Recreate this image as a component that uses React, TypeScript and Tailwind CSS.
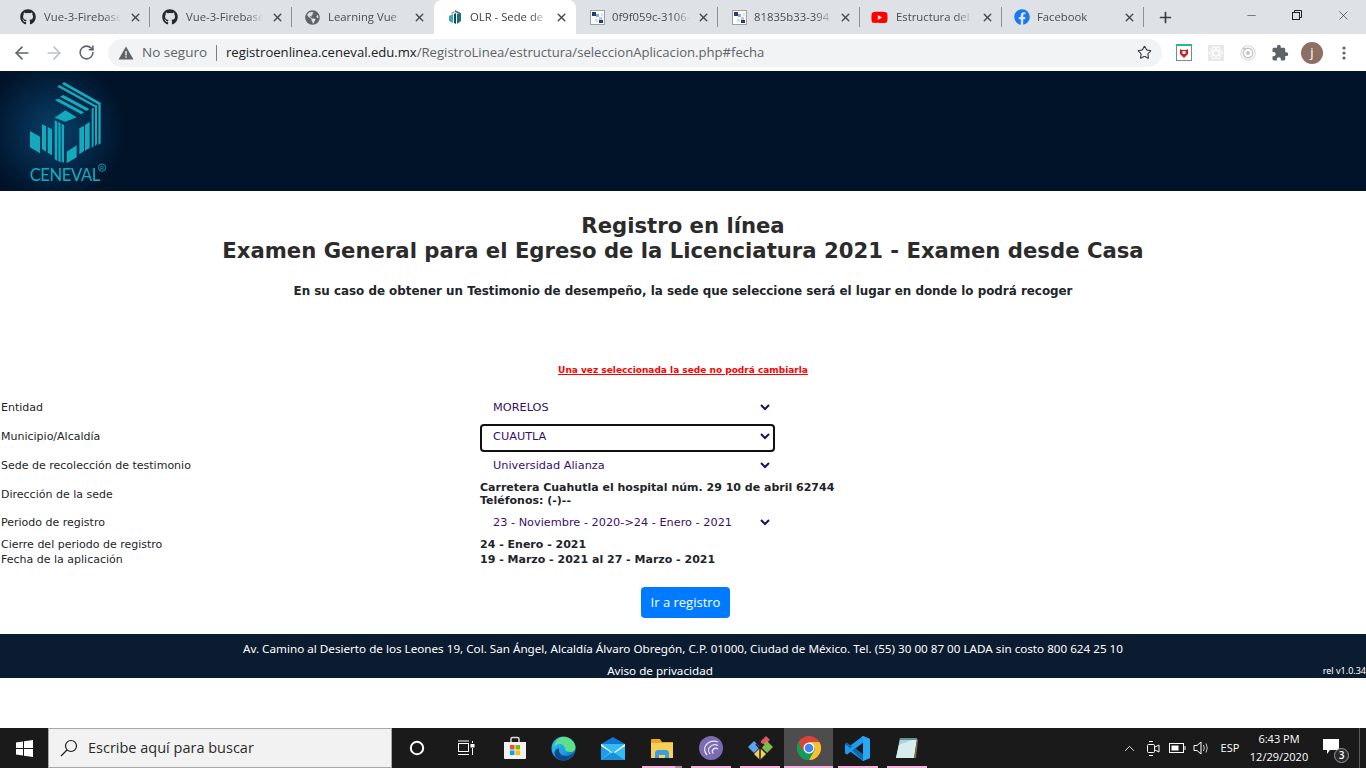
import { ArrowLeft, ArrowRight, RotateCw, Star, X, Plus, Minus, ChevronUp } from 'lucide-react';
import { FaGithub, FaGlobeAmericas, FaYoutube, FaFacebook } from 'react-icons/fa';
import { MdExtension } from 'react-icons/md';

function OlrIcon() {
	return (
		<svg width="16" height="16" viewBox="0 0 16 16">
			<path d="M8 1l5 2.5v2L8 3z" fill="#2a7f8f" />
			<path d="M2 7l4-2v9l-4-2z" fill="#3fa7b5" />
			<path d="M7 5l2-1v11l-2-1z" fill="#0d4a5a" />
			<path d="M10 5l4-1v8l-4 3z" fill="#1b6f80" />
			<path d="M4 4l3-2 1 1-3 2z" fill="#c2a35a" />
		</svg>
	);
}

function PixelIcon() {
	return (
		<svg width="15" height="15" viewBox="0 0 15 15">
			<rect x="0.5" y="0.5" width="14" height="14" fill="#fff" stroke="#9aa0a6" />
			<rect x="2" y="2" width="4" height="4" fill="#1f3f73" />
			<rect x="6" y="4" width="3" height="3" fill="#8fa9cf" />
			<rect x="9" y="7" width="3" height="3" fill="#b9cbe3" />
			<rect x="9" y="10" width="4" height="3" fill="#1f3f73" />
			<rect x="5" y="9" width="3" height="3" fill="#d5dfee" />
			<rect x="11" y="3" width="2" height="3" fill="#d5dfee" />
		</svg>
	);
}

const tabs = [
	{ title: 'Vue-3-Firebase', icon: <FaGithub size={16} className="text-[#24292e]" />, left: 'pl-[11px]', gap: 'gap-[8px]' },
	{ title: 'Vue-3-Firebase', icon: <FaGithub size={16} className="text-[#24292e]" />, left: 'pl-[11px]', gap: 'gap-[8px]' },
	{ title: 'Learning Vue', icon: <FaGlobeAmericas size={15} className="text-[#5f6368]" />, left: 'pl-[12px]', gap: 'gap-[7px]' },
	{ title: 'OLR - Sede de', icon: <OlrIcon />, left: 'pl-[12px]', gap: 'gap-[7px]', active: true },
	{ title: '0f9f059c-3106-', icon: <PixelIcon />, left: 'pl-[13px]', gap: 'gap-[6px]' },
	{ title: '81835b33-394', icon: <PixelIcon />, left: 'pl-[13px]', gap: 'gap-[6px]' },
	{ title: 'Estructura del', icon: <FaYoutube size={17} className="text-[#f00]" />, left: 'pl-[11px]', gap: 'gap-[8px]' },
	{ title: 'Facebook', icon: <FaFacebook size={16} className="text-[#1877f2]" />, left: 'pl-[11px]', gap: 'gap-[7px]' },
];

function TabStrip() {
	return (
		<div className="h-[34px] bg-[#dee1e6] flex pl-2 font-['Open_Sans',sans-serif] text-[11.3px]">
			{tabs.map((t, i) => (
				<div
					key={i}
					className={`relative w-[142px] h-full flex items-center ${t.left} pr-[8px] ${t.gap} ${t.active ? 'bg-white rounded-t-lg text-[#3c4043]' : 'text-[#4a4d51]'}`}
				>
					<span className="w-[17px] flex justify-center shrink-0">{t.icon}</span>
					<span className="flex-1 overflow-hidden whitespace-nowrap [mask-image:linear-gradient(to_right,black_78%,transparent_100%)]">{t.title}</span>
					<X size={13} strokeWidth={2.6} className="text-[#45484c] shrink-0" />
					{!t.active && i !== 2 && <div className="absolute right-0 top-[7px] h-[20px] w-px bg-[#8e9196]" />}
				</div>
			))}
			<div className="w-[42px] flex items-center justify-center">
				<Plus size={17} strokeWidth={2.4} className="text-[#3c4043]" />
			</div>
			<div className="flex-1" />
			<div className="flex h-full items-start text-[#202124]">
				<div className="w-[46px] h-[30px] flex items-center justify-center"><Minus size={13} strokeWidth={1} /></div>
				<div className="w-[46px] h-[30px] flex items-center justify-center">
					<svg width="10" height="10" viewBox="0 0 10 10" fill="none" stroke="currentColor">
						<rect x="0.5" y="2.5" width="7" height="7" />
						<path d="M2.5 2.5v-2h7v7h-2" />
					</svg>
				</div>
				<div className="w-[46px] h-[30px] flex items-center justify-center"><X size={15} strokeWidth={1} /></div>
			</div>
		</div>
	);
}

function ExtCell({ children }: { children: React.ReactNode }) {
	return <div className="w-[32px] flex items-center justify-center">{children}</div>;
}

function Toolbar() {
	return (
		<div className="h-[37px] bg-white flex items-center font-['Open_Sans',sans-serif]">
			<div className="w-[108px] flex items-center pl-[6px] text-[#5f6368]">
				<ExtCell><ArrowLeft size={20} strokeWidth={2} /></ExtCell>
				<ExtCell><ArrowRight size={20} strokeWidth={2} className="text-[#bdc1c6]" /></ExtCell>
				<ExtCell><RotateCw size={17} strokeWidth={2.2} /></ExtCell>
			</div>
			<div className="w-[1054px] h-[28px] rounded-full bg-[#f1f3f4] flex items-center pl-[10px] pr-[10px] text-[13.1px]">
				<svg width="16" height="14" viewBox="0 0 16 14" className="shrink-0">
					<path d="M8 0.5L15.5 13.5H0.5z" fill="#5f6368" />
					<rect x="7.3" y="5" width="1.4" height="4.5" fill="#f1f3f4" />
					<rect x="7.3" y="10.3" width="1.4" height="1.5" fill="#f1f3f4" />
				</svg>
				<span className="ml-[8px] w-[65px] text-[13.5px] text-[#5f6368] whitespace-nowrap">No seguro</span>
				<span className="ml-[9px] mr-[9px] w-px h-[16px] bg-[#7a7d81]" />
				<span className="whitespace-nowrap text-[#5f6368]"><span className="text-[#202124]">registroenlinea.ceneval.edu.mx</span>/RegistroLinea/estructura/seleccionAplicacion.php#fecha</span>
				<span className="flex-1" />
				<Star size={15} strokeWidth={1.8} className="text-[#3c4043]" />
			</div>
			<div className="flex-1 flex items-center pl-[6px]">
				<ExtCell>
					<svg width="18" height="18" viewBox="0 0 18 18">
						<rect x="1.5" y="1.5" width="15" height="15" fill="#fff" stroke="#80868b" />
						<rect x="1" y="0" width="16" height="2" fill="#1bc47d" />
						<path d="M5 5l2 1h4l2-1v5l-4 4-4-4z" fill="#c8202f" />
						<rect x="7.5" y="7" width="3" height="3" fill="#fff" />
					</svg>
				</ExtCell>
				<ExtCell>
					<svg width="16" height="16" viewBox="0 0 16 16">
						<rect width="16" height="16" fill="#e8e8e8" />
						<g fill="none" stroke="#fff" strokeWidth="1">
							<ellipse cx="8" cy="8" rx="6.5" ry="2.6" />
							<ellipse cx="8" cy="8" rx="6.5" ry="2.6" transform="rotate(60 8 8)" />
							<ellipse cx="8" cy="8" rx="6.5" ry="2.6" transform="rotate(120 8 8)" />
						</g>
					</svg>
				</ExtCell>
				<ExtCell>
					<svg width="16" height="16" viewBox="0 0 16 16" fill="none">
						<circle cx="8" cy="8" r="7.2" stroke="#d5d5d5" />
						<circle cx="8" cy="8" r="4.8" stroke="#c4c4c4" strokeWidth="1.4" />
						<circle cx="8" cy="8" r="2" fill="#c4c4c4" />
						<circle cx="4" cy="3.5" r="1" fill="#bdbdbd" />
					</svg>
				</ExtCell>
				<ExtCell><MdExtension size={18} className="text-[#5f6368]" /></ExtCell>
				<ExtCell>
					<div className="w-[22px] h-[22px] rounded-full bg-[#8d6e63] flex items-center justify-center text-white text-[13px]">j</div>
				</ExtCell>
				<ExtCell>
					<svg width="4" height="14" viewBox="0 0 4 14" fill="#5f6368">
						<circle cx="2" cy="2" r="1.6" />
						<circle cx="2" cy="7" r="1.6" />
						<circle cx="2" cy="12" r="1.6" />
					</svg>
				</ExtCell>
			</div>
		</div>
	);
}

function CenevalLogo() {
	const c = '#14aabd';
	return (
		<svg width="140" height="120" viewBox="0 0 420 360">
			<g fill={c}>
				<path d="M192 33l110 62-6 6-110-62z" />
				<path d="M178 42l112 62-6 5-112-62z" />
				<path d="M190 72l78 42-8 6-80-43z" />
				<path d="M176 83l76 41-8 6-80-43z" />
				<path d="M196 118l34 21-34 13-32-12z" />
				<path d="M275 114l6-5v116l-6 6z" />
				<path d="M285 106l6-4v118l-6 5z" />
				<path d="M295 99l7-4v122l-7 5z" />
				<path d="M238 172l14-8v76l-14 10z" />
				<path d="M255 162l14-9v78l-14 8z" />
				<path d="M164 148l8 4v118l-8-5z" />
				<path d="M175 153l7 4v117l-7-4z" />
				<path d="M185 158l7 4v113l-7-3z" />
				<path d="M200 242l30-19v36l-30 18z" />
				<path d="M126 160l12 6v76l-12-8z" />
				<path d="M143 168l13 7v78l-13-8z" />
				<path d="M90 180l30 17v50l-30-18z" />
			</g>
			<text x="195" y="330" textAnchor="middle" fontFamily="Lato,sans-serif" fontSize="50" fill={c} textLength="212">CENEVAL</text>
			<circle cx="306" cy="290" r="11" fill="none" stroke={c} strokeWidth="2.5" />
			<text x="306" y="297" textAnchor="middle" fontFamily="'Liberation Sans',sans-serif" fontSize="17" fill={c}>R</text>
		</svg>
	);
}

function Chevron() {
	return (
		<svg width="10" height="7" viewBox="0 0 10 7" fill="none" stroke="#14145f" strokeWidth="2" className="mb-[2px]">
			<path d="M1 1l4 4 4-4" />
		</svg>
	);
}

function FakeSelect({ value, focused }: { value: string; focused?: boolean }) {
	return (
		<div
			className={`w-[295px] h-[28px] rounded-[4px] border-2 flex items-center justify-between pl-[11px] pr-[3.5px] text-[11.3px] text-[#37106b] ${focused ? 'border-[#101010]' : 'border-transparent'}`}
		>
			<span>{value}</span>
			<Chevron />
		</div>
	);
}

function Row({ label, className, children }: { label: string; className: string; children: React.ReactNode }) {
	return (
		<div className={`flex items-center ${className}`}>
			<div className="w-[480px] pl-px text-[#212529]">{label}</div>
			<div>{children}</div>
		</div>
	);
}

function MainPage() {
	return (
		<div className="flex flex-col font-['DejaVu_Sans',sans-serif] text-[#212529]">
			<div className="h-[120px] bg-[#001329] relative overflow-hidden">
				<div className="absolute left-[-15px] top-[-10px] w-[140px] h-[140px] bg-[radial-gradient(closest-side,#07416a_0%,#04294a_50%,#00132900_100%)]" />
				<div className="relative"><CenevalLogo /></div>
			</div>
			<div className="bg-white h-[443px] flex flex-col">
				<div className="pt-[22px] text-center font-bold text-[21.2px] leading-[25px] text-[#2b2b2b]">
					<div>Registro en línea</div>
					<div>Examen General para el Egreso de la Licenciatura 2021 - Examen desde Casa</div>
				</div>
				<p className="mt-[19px] text-center font-bold text-[11.9px] leading-[18px]">
					En su caso de obtener un Testimonio de desempeño, la sede que seleccione será el lugar en donde lo podrá recoger
				</p>
				<p className="mt-[63px] text-center font-bold text-[9px] leading-[14px] text-[#f00] underline">
					Una vez seleccionada la sede no podrá cambiarla
				</p>
				<div className="mt-[17px] text-[11px]">
					<Row label="Entidad" className="h-[29px]"><FakeSelect value="MORELOS" /></Row>
					<Row label="Municipio/Alcaldía" className="h-[29px]"><FakeSelect value="CUAUTLA" focused /></Row>
					<Row label="Sede de recolección de testimonio" className="h-[29px]"><FakeSelect value="Universidad Alianza" /></Row>
					<Row label="Dirección de la sede" className="h-[28px]">
						<div className="font-bold leading-[13px] -mt-[2px]">
							<div>Carretera Cuahutla el hospital núm. 29 10 de abril 62744</div>
							<div>Teléfonos: (-)--</div>
						</div>
					</Row>
					<Row label="Periodo de registro" className="h-[29px]"><FakeSelect value="23 - Noviembre - 2020->24 - Enero - 2021" /></Row>
					<Row label="Cierre del periodo de registro" className="h-[15px]"><span className="font-bold">24 - Enero - 2021</span></Row>
					<Row label="Fecha de la aplicación" className="h-[15px]"><span className="font-bold">19 - Marzo - 2021 al 27 - Marzo - 2021</span></Row>
				</div>
				<div className="mt-[19px] flex justify-center pl-[5px]">
					<button className="w-[89px] h-[31px] rounded-[4px] bg-[#007bff] text-white text-[13px] font-['Open_Sans',sans-serif]">Ir a registro</button>
				</div>
			</div>
			<div className="h-[44px] bg-[#0c1c30] text-white relative font-['Noto_Sans',sans-serif] text-[11.66px]">
				<div className="h-[29px] flex items-center justify-center">
					Av. Camino al Desierto de los Leones 19, Col. San Ángel, Alcaldía Álvaro Obregón, C.P. 01000, Ciudad de México. Tel. (55) 30 00 87 00 LADA sin costo 800 624 25 10
				</div>
				<div className="h-[15px] flex items-center justify-center pr-[46px]">Aviso de privacidad</div>
				<span className="absolute right-0 bottom-[1px] text-[9px] leading-[12px]">rel v1.0.34</span>
			</div>
			<div className="h-[50px] bg-white" />
		</div>
	);
}

const barIcons = [
	{
		key: 'circle',
		icon: (
			<svg width="16" height="16" viewBox="0 0 16 16" fill="none" stroke="#fff" strokeWidth="2">
				<circle cx="8" cy="8" r="6.2" />
			</svg>
		),
	},
	{
		key: 'tasks',
		icon: (
			<svg width="18" height="16" viewBox="0 0 18 16" fill="none" stroke="#fff" strokeWidth="1">
				<rect x="1.5" y="3.5" width="10" height="8" />
				<path d="M1 1h11M1 14.500h11M15.500 1v2M15.500 8v7" />
				<rect x="14" y="4.500" width="3" height="2.500" fill="#fff" />
			</svg>
		),
	},
	{
		key: 'store',
		icon: (
			<svg width="24" height="24" viewBox="0 0 24 24">
				<path d="M8 6V3q0-1.500 1.500-1.500h5Q16 1.500 16 3v3" fill="none" stroke="#d9d9d9" strokeWidth="1.500" />
				<path d="M1 6h22v16q0 1-1 1H2q-1 0-1-1z" fill="#f2f2f2" />
				<rect x="7" y="9" width="4.500" height="4.500" fill="#f25022" />
				<rect x="12.500" y="9" width="4.500" height="4.500" fill="#7fba00" />
				<rect x="7" y="14.500" width="4.500" height="4.500" fill="#00a4ef" />
				<rect x="12.500" y="14.500" width="4.500" height="4.500" fill="#ffb900" />
			</svg>
		),
	},
	{
		key: 'edge',
		icon: (
			<svg width="25" height="25" viewBox="0 0 25 25">
				<defs>
					<linearGradient id="edgeA" x1="0" y1="0" x2="1" y2="1">
						<stop offset="0" stopColor="#35c1f1" />
						<stop offset="0.6" stopColor="#1b9de2" />
						<stop offset="1" stopColor="#0c59a4" />
					</linearGradient>
				</defs>
				<circle cx="12.500" cy="12.500" r="12" fill="url(#edgeA)" />
				<path d="M12 1c6-.5 12 4 12.500 10 .2 3-2 5-5 5-3.500 0-5.500-1-5.500-3 0-2.500-2-5-5.500-5-2 0-4 1-5 3C4 5 7.500 1.500 12 1z" fill="#5ee08a" />
				<path d="M8 12c-1 5 3 8 7 8 3 0 6-1 8-4-1.500 5-6 8.500-11 8.500-5 0-9-4-8.500-8 .3-2 2-4 4.500-4.500z" fill="#0c4a8f" />
			</svg>
		),
	},
	{
		key: 'mail',
		icon: (
			<svg width="24" height="23" viewBox="0 0 24 23">
				<path d="M0 7L12 0l12 7v3H0z" fill="#0f78d4" />
				<rect y="7" width="24" height="16" fill="#35bdf2" />
				<path d="M0 7l12 9 12-9v2l-12 8L0 9z" fill="#fff" />
				<path d="M0 9l9 6-9 8z" fill="#1f9ee8" />
				<path d="M24 23H0l12-8 12 8z" fill="#1a8fdc" />
			</svg>
		),
	},
	{
		key: 'folder',
		bar: true,
		split: true,
		icon: (
			<svg width="22" height="19" viewBox="0 0 22 19">
				<path d="M0 1q0-1 1-1h8l2 3h11v15H0z" fill="#e8a81f" />
				<rect y="4" width="22" height="15" fill="#f6cf5c" />
				<path d="M6 11h10l2 2v6h-4v-3H8v3H4v-6z" fill="#3c9fdc" />
			</svg>
		),
	},
	{
		key: 'torrent',
		bar: true,
		icon: (
			<svg width="24" height="24" viewBox="0 0 24 24" fill="none">
				<circle cx="12" cy="12" r="12" fill="#7b6bb2" />
				<path d="M19 6a10 10 0 0 0-12 3c-2 3-1.500 7 1 10" stroke="#e8e4f4" strokeWidth="1.300" />
				<path d="M19 9.500a7 7 0 0 0-8.500 1.800c-1.500 2-1 5 .8 6.700" stroke="#e8e4f4" strokeWidth="1.300" />
				<path d="M19 13a4 4 0 0 0-5 .5c-1 1.300-.7 3 .4 4" stroke="#e8e4f4" strokeWidth="1.300" />
			</svg>
		),
	},
	{
		key: 'kraken',
		bar: true,
		icon: (
			<svg width="26" height="26" viewBox="0 0 26 26">
				<path d="M13 7l6-6 4 4-6 5z" fill="#e4575f" />
				<path d="M1 12l6-6 6 6-6 6z" fill="#5da3f0" />
				<path d="M14 12l6-6 6 6-6 6z" fill="#7dbb4e" />
				<path d="M7 19l6-6 6 6-6 6z" fill="#f0d05c" />
				<path d="M13 4v21M9 9l4 5 4-5" stroke="#222" strokeWidth="1.500" fill="none" />
			</svg>
		),
	},
	{
		key: 'chrome',
		bar: true,
		on: true,
		icon: (
			<svg width="24" height="24" viewBox="0 0 24 24">
				<circle cx="12" cy="12" r="12" fill="#db4437" />
				<path d="M12 24a12 12 0 0 0 10.400-18H12l6 6z" fill="#fbc02d" />
				<path d="M12 24L18 13.500 12 12 6 13.500 1.600 6a12 12 0 0 0 10.400 18z" fill="#0f9d58" />
				<path d="M1.600 6l4.600 9.500L12 6z" fill="#db4437" />
				<circle cx="12" cy="12" r="5.500" fill="#fff" />
				<circle cx="12" cy="12" r="4.300" fill="#4285f4" />
			</svg>
		),
	},
	{
		key: 'vscode',
		bar: true,
		icon: (
			<svg width="25" height="25" viewBox="0 0 25 25">
				<path d="M18 0l7 3v19l-7 3L7 14l4-3z" fill="#0f7fcc" />
				<path d="M18 0v25L4 14.500l-4 3V8l4 2.500z" fill="#1f9cf0" />
				<path d="M18 6.500v12l-8-6z" fill="#1a1a1a" />
				<path d="M0 7.500l2-1 16 12v6.500z" fill="#0a6ab0" />
				<path d="M0 17.500l2 1L18 6.500V0z" fill="#1f9cf0" />
				<path d="M18 0l7 3v19l-7 3z" fill="#2aa7f5" />
			</svg>
		),
	},
	{
		key: 'notes',
		bar: true,
		icon: (
			<svg width="24" height="24" viewBox="0 0 24 24">
				<path d="M5 2h17l-3 20H1z" fill="#a9d6dc" />
				<path d="M4 9l18-7-3 20H1z" fill="#d7ecee" />
				<path d="M5 2h17v2H5z" fill="#6f8f96" />
				<path d="M22 3l-3 19h2l2-18z" fill="#806a4a" />
			</svg>
		),
	},
];

function Taskbar() {
	return (
		<div className="h-[40px] bg-[#1a1a1a] flex items-stretch text-white">
			<div className="w-[48px] flex items-center justify-center">
				<svg width="17" height="17" viewBox="0 0 17 17" fill="#fff">
					<path d="M0 2.400L7 1.400v6.500H0zM8 1.300L17 0v7.900H8zM0 9h7v6.600L0 14.600zM8 9h9v8L8 15.700z" />
				</svg>
			</div>
			<div className="w-[344px] bg-[#f2f2f2] border border-[#a8a8a8] flex items-center pl-[11px] font-['Open_Sans',sans-serif] text-[14.500px] text-[#2b2b2b]">
				<svg width="18" height="18" viewBox="0 0 18 18" fill="none" stroke="#1f1f1f" strokeWidth="1.200">
					<circle cx="11" cy="7" r="5.500" />
					<path d="M7 11L1 17" />
				</svg>
				<span className="ml-[10px]">Escribe aquí para buscar</span>
			</div>
			{barIcons.map((b) => (
				<div key={b.key} className={`relative w-[49px] flex items-center justify-center ${b.on ? 'bg-[#4d4d4d]' : ''}`}>
					{b.icon}
					{b.bar && <div className={`absolute bottom-0 h-[2px] bg-[#f4b5dc] ${b.on ? 'left-0 right-0' : 'left-[5px] right-[4px]'}`} />}
					{b.split && <div className="absolute bottom-0 h-[2px] left-[38px] right-[4px] bg-[#b98aa8]" />}
				</div>
			))}
			<div className="flex-1" />
			<div className="w-[249px] flex items-stretch font-['Open_Sans',sans-serif] text-[11px]">
				<div className="w-[24px] flex items-center justify-center"><ChevronUp size={17} strokeWidth={1.200} /></div>
				<div className="w-[24px] flex items-center justify-center">
					<svg width="14" height="17" viewBox="0 0 14 17" fill="none" stroke="#fff">
						<rect x="1.500" y="4.500" width="7" height="8" rx="1" />
						<path d="M9 7l4-2v7l-4-2M3 1.500h4M3 15.500h4" />
					</svg>
				</div>
				<div className="w-[24px] flex items-center justify-center">
					<svg width="17" height="10" viewBox="0 0 17 10" fill="none" stroke="#fff">
						<rect x="0.500" y="0.500" width="14" height="9" />
						<rect x="2.500" y="2.500" width="7" height="5" fill="#fff" stroke="none" />
						<path d="M16 3v4" />
					</svg>
				</div>
				<div className="w-[24px] flex items-center justify-center">
					<svg width="17" height="16" viewBox="0 0 17 16" fill="none" stroke="#fff">
						<path d="M1 5.500h3L8 2v12l-4-3.500H1z" />
						<path d="M10.500 5q1.500 3 0 6M13 3.500q2.500 4.500 0 9" stroke="#c8c8c8" />
					</svg>
				</div>
				<div className="w-[34px] flex items-center justify-center">ESP</div>
				<div className="w-[64px] flex flex-col items-center justify-center leading-[18px] whitespace-nowrap">
					<div>6:43 PM</div>
					<div>12/29/2020</div>
				</div>
				<div className="relative w-[48px] flex items-center justify-center pr-[8px] pb-[3px]">
					<svg width="16" height="15" viewBox="0 0 16 15" fill="#fff">
						<path d="M0 0h16v11H7l-3 4v-4H0z" />
					</svg>
					<span className="absolute left-[23px] top-[20px] w-[15px] h-[15px] rounded-full bg-[#2b2b2b] border border-[#9a9a9a] flex items-center justify-center text-[10px] font-semibold">3</span>
				</div>
				<div className="w-[7px] border-l border-[#5a5a5a]" />
			</div>
		</div>
	);
}

export default function App() {
	return (
		<div className="w-[1366px] h-[768px] overflow-hidden flex flex-col bg-white">
			<TabStrip />
			<Toolbar />
			<MainPage />
			<Taskbar />
		</div>
	);
}
